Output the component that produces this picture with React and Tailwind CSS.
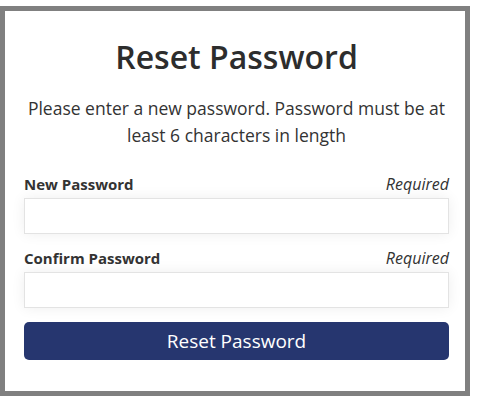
import React from "react";

const Field = ({ label, className = "" }) => (
  <div className={className}>
    <div className="flex items-end justify-between leading-[19px] text-[#333]">
      <label className="text-[15px] font-bold">{label}</label>
      <span className="text-[16px] italic">Required</span>
    </div>
    <input
      type="password"
      className="mt-[4px] block h-[36px] w-full border border-[#e3e3e3] bg-white shadow-[0_0_14px_rgba(0,0,0,0.07)] outline-none"
    />
  </div>
);

const App = () => {
  return (
    <div className="h-[396px] w-[477px] overflow-hidden bg-white pt-[6px] font-['Open_Sans',sans-serif]">
      {/* card */}
      <div className="h-[390px] w-[470px] border-[5px] border-[#808080] bg-white pl-[19px] pr-[16px]">
        <h1 className="mt-[24px] text-center text-[32px] leading-[44px] font-semibold text-[#2d2d2d]">
          Reset Password
        </h1>
        <p className="mt-[16px] text-center text-[17.5px] leading-[27px] text-[#333]">
          Please enter a new password. Password must be at least 6 characters in length
        </p>

        <Field label="New Password" className="mt-[26px]" />
        <Field label="Confirm Password" className="mt-[15px]" />

        <button className="mt-[14px] h-[38px] w-full rounded-[5px] bg-[#26366f] text-[19px] text-white">
          Reset Password
        </button>
      </div>
    </div>
  );
};

export default App;
